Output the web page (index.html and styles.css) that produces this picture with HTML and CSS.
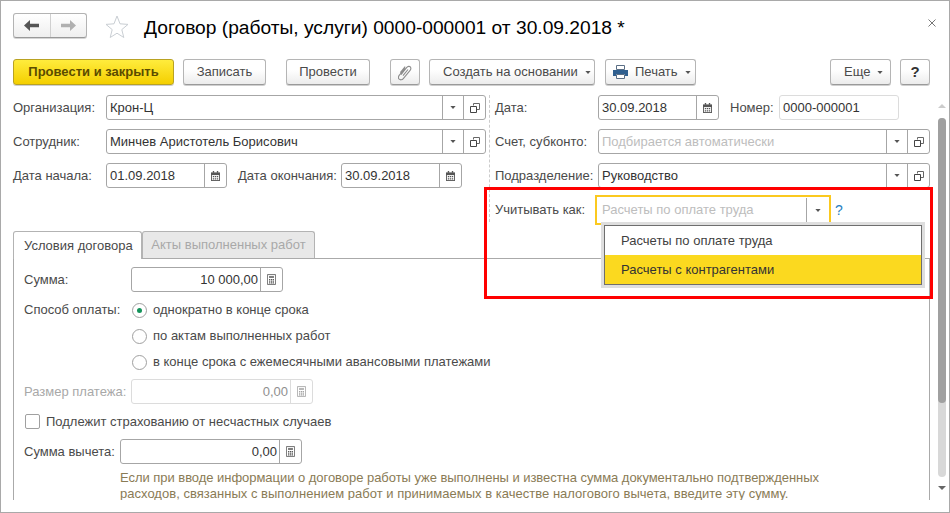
FILE: index.html
```html
<!DOCTYPE html>
<html lang="ru">
<head>
<meta charset="utf-8">
<title>Договор</title>
<link rel="stylesheet" href="styles.css">
</head>
<body>
<svg class="defs" width="0" height="0" aria-hidden="true">
  <symbol id="i-tri" viewBox="0 0 7 4"><path d="M0 0h7L3.500 4z" fill="#555"/></symbol>
  <symbol id="i-open" viewBox="0 0 10 10"><path d="M3.500 2.500V.5h6v6h-2.500" fill="none" stroke="#666"/><path d="M.5 3.500h6v6h-6z" fill="none" stroke="#444"/></symbol>
  <symbol id="i-cal" viewBox="0 0 10 11"><path d="M2 0h1.500v2H2zM6.500 0H8v2H6.500z" fill="#555"/><path d="M0 1.500h10V11H0z" fill="#555"/><path d="M1 4.500h8V10H1z" fill="#fff"/><path d="M2 5.500h1.500V7H2zM4.250 5.500h1.500V7h-1.500zM6.500 5.500H8V7H6.500zM2 8h1.500v1.300H2zM4.250 8h1.500v1.300h-1.500zM6.500 8H8v1.300H6.500z" fill="#555"/></symbol>
  <symbol id="i-calc" viewBox="0 0 11 13"><path d="M.5.500h10v12H.5z" fill="#fff" stroke="#555"/><path d="M2.500 2.500h6v2h-6zM2.500 6h1.500v1.300H2.500zM4.800 6h1.500v1.300H4.800zM7 6h1.500v1.300H7zM2.500 8h1.500v1.300H2.500zM4.800 8h1.500v1.300H4.800zM7 8h1.500v1.300H7zM2.500 10h1.500v1.300H2.500zM4.800 10h1.500v1.300H4.800zM7 10h1.500v1.300H7z" fill="#555"/></symbol>
</svg>
<div class="window">
  <header class="header">
    <div class="nav">
      <span class="nav-btn"><svg width="15" height="11" viewBox="0 0 15 11"><path d="M6 0L0 5.500 6 11V7.200h9V3.800H6z" fill="#555"/></svg></span>
      <span class="nav-btn nav-next"><svg width="15" height="11" viewBox="0 0 15 11"><path d="M9 0l6 5.500L9 11V7.200H0V3.800h9z" fill="#b0b0b0"/></svg></span>
    </div>
    <svg class="star" width="24" height="23" viewBox="0 0 24 23"><path d="M12 1l3 7.800 8 .6-6.200 5.200 2 7.900L12 18.200l-6.800 4.300 2-7.900L1 9.400l8-.6z" fill="#fff" stroke="#c9ced3"/></svg>
    <h1 class="title">Договор (работы, услуги) 0000-000001 от 30.09.2018 *</h1>
    <svg class="close" width="8" height="8" viewBox="0 0 8 8"><path d="M.5.500l7 7M7.500.500l-7 7" stroke="#777" fill="none"/></svg>
  </header>

  <div class="toolbar">
    <button class="btn btn-primary">Провести и закрыть</button>
    <button class="btn btn-save">Записать</button>
    <button class="btn btn-post">Провести</button>
    <button class="btn btn-clip"><svg width="14" height="17" viewBox="0 0 14 17"><path d="M3.500 10.500l5.800-7.300c1-1.300 2.800-1.300 3.500-.5.800 1 .6 2.500-.4 3.700l-6.600 8c-1.200 1.400-3 1.600-4.100.6-1-1-.9-2.700.2-4.100l5.600-6.800M5.500 11.500l5-6.200M2.800 8.500l4.900-6" transform="translate(-.5 .2)" fill="none" stroke="#8c8c8c" stroke-width="1.100"/></svg></button>
    <button class="btn btn-create">Создать на основании<svg class="tri" width="6" height="3"><use href="#i-tri"/></svg></button>
    <button class="btn btn-print"><svg class="printer" width="15" height="14" viewBox="0 0 15 14"><path d="M3.500.500h8v4h-8z" fill="#fff" stroke="#5a6e85"/><path d="M0 5h15v6h-3V9H3v2H0z" fill="#2f5f8f"/><path d="M3.500 9.500h8v4h-8z" fill="#fff" stroke="#5a6e85"/></svg>Печать<svg class="tri" width="6" height="3"><use href="#i-tri"/></svg></button>
    <span class="spacer"></span>
    <button class="btn btn-more">Еще<svg class="tri" width="6" height="3"><use href="#i-tri"/></svg></button>
    <button class="btn btn-help">?</button>
  </div>

  <div class="main">
    <div class="form">
      <div class="top">
        <div class="col-left">
          <div class="row">
            <label class="lbl lbl-left">Организация:</label>
            <div class="field grow"><span class="val">Крон-Ц</span><span class="cell"><svg width="6" height="3"><use href="#i-tri"/></svg></span><span class="cell"><svg width="10" height="10"><use href="#i-open"/></svg></span></div>
          </div>
          <div class="row">
            <label class="lbl lbl-left">Сотрудник:</label>
            <div class="field grow"><span class="val">Минчев Аристотель Борисович</span><span class="cell"><svg width="6" height="3"><use href="#i-tri"/></svg></span><span class="cell"><svg width="10" height="10"><use href="#i-open"/></svg></span></div>
          </div>
          <div class="row">
            <label class="lbl lbl-left">Дата начала:</label>
            <div class="field date"><span class="val">01.09.2018</span><span class="cell"><svg width="9" height="10"><use href="#i-cal"/></svg></span></div>
            <label class="lbl lbl-end">Дата окончания:</label>
            <div class="field date"><span class="val">30.09.2018</span><span class="cell"><svg width="9" height="10"><use href="#i-cal"/></svg></span></div>
          </div>
        </div>
        <div class="col-right">
          <div class="row">
            <label class="lbl lbl-right">Дата:</label>
            <div class="field date"><span class="val">30.09.2018</span><span class="cell"><svg width="9" height="10"><use href="#i-cal"/></svg></span></div>
            <label class="lbl lbl-num">Номер:</label>
            <div class="field number"><span class="val">0000-000001</span></div>
          </div>
          <div class="row">
            <label class="lbl lbl-right">Счет, субконто:</label>
            <div class="field grow"><span class="val muted">Подбирается автоматически</span><span class="cell"><svg width="6" height="3"><use href="#i-tri"/></svg></span><span class="cell"><svg width="10" height="10"><use href="#i-open"/></svg></span></div>
          </div>
          <div class="row">
            <label class="lbl lbl-right">Подразделение:</label>
            <div class="field grow"><span class="val">Руководство</span><span class="cell"><svg width="6" height="3"><use href="#i-tri"/></svg></span><span class="cell"><svg width="10" height="10"><use href="#i-open"/></svg></span></div>
          </div>
          <div class="row row-focus">
            <label class="lbl lbl-focus">Учитывать как:</label>
            <div class="field focus"><span class="val muted">Расчеты по оплате труда</span><span class="cell-line"></span><span class="cell cell-bare"><svg width="6" height="3"><use href="#i-tri"/></svg></span></div>
            <span class="hint">?</span>
          </div>
        </div>
      </div>

      <div class="tabs">
        <span class="tab tab-active">Условия договора</span>
        <span class="tab">Акты выполненных работ</span>
      </div>
      <div class="panel">
        <div class="row row-sum">
          <label class="lbl lbl-sum">Сумма:</label>
          <div class="field money"><span class="val num">10 000,00</span><span class="cell"><svg width="9" height="11"><use href="#i-calc"/></svg></span></div>
        </div>
        <div class="radio-group">
          <div class="radio-row">
            <label class="lbl lbl-sum">Способ оплаты:</label>
            <span class="radio radio-on"></span><span class="opt">однократно в конце срока</span>
          </div>
          <div class="radio-row radio-indent"><span class="radio"></span><span class="opt">по актам выполненных работ</span></div>
          <div class="radio-row radio-indent"><span class="radio"></span><span class="opt">в конце срока с ежемесячными авансовыми платежами</span></div>
        </div>
        <div class="row row-pay">
          <label class="lbl lbl-sum lbl-disabled">Размер платежа:</label>
          <div class="field money-wide disabled"><span class="val num muted-num">0,00</span><span class="cell"><svg class="dim" width="9" height="11"><use href="#i-calc"/></svg></span></div>
        </div>
        <div class="check-row"><span class="check"></span><span class="opt">Подлежит страхованию от несчастных случаев</span></div>
        <div class="row row-ded">
          <label class="lbl lbl-ded">Сумма вычета:</label>
          <div class="field money-wide"><span class="val num">0,00</span><span class="cell"><svg width="9" height="11"><use href="#i-calc"/></svg></span></div>
        </div>
        <p class="note"><span class="note-a">Если при вводе информации о договоре работы уже выполнены и известна сумма документально подтвержденных</span><span class="note-b">расходов, связанных с выполнением работ и принимаемых в качестве налогового вычета, введите эту сумму.</span></p>
      </div>
    </div>
    <div class="scroll">
      <span class="arrow arrow-up"></span>
      <div class="track"><div class="thumb"></div></div>
      <span class="arrow arrow-down"></span>
    </div>
  </div>

  <div class="popup">
    <div class="item">Расчеты по оплате труда</div>
    <div class="item item-on">Расчеты с контрагентами</div>
  </div>
  <div class="redbox"></div>
</div>
</body>
</html>
```
FILE: styles.css
```css
* { box-sizing: border-box; }
html, body { margin: 0; padding: 0; background: #fff; }
body { font: 13px/16px "Liberation Sans", Arial, sans-serif; color: #4a4a4a; }
.defs { position: absolute; }
.window { position: relative; width: 950px; height: 513px; border: 1px solid #a9a9a9; background: #fff; overflow: hidden; display: flex; flex-direction: column; }

.header { display: flex; align-items: flex-start; height: 58px; padding: 12px 13px 0 12px; flex: none; }
.nav { display: flex; width: 74px; height: 25px; border: 1px solid #b3b3b3; border-bottom-color: #999; border-radius: 3px; background: linear-gradient(#fff, #efefef); box-shadow: 0 1px 0 #d5d5d5; }
.nav-btn { width: 37px; display: flex; align-items: center; justify-content: center; }
.nav-next { border-left: 1px solid #d0d0d0; }
.star { margin: 2px 0 0 18px; flex: none; }
.title { margin: 3px 0 0 15px; font: 400 19.2px/24px "Liberation Sans", Arial, sans-serif; color: #000; white-space: nowrap; }
.close { margin: 6px 0 0 auto; flex: none; }

.toolbar { display: flex; height: 27px; padding: 0 19px 0 12px; flex: none; }
.btn { height: 26px; padding: 0; border: 1px solid #b5b5b5; border-bottom-color: #9a9a9a; border-radius: 3px; background: linear-gradient(#fff 40%, #ececec); box-shadow: 0 1px 0 #cfcfcf; font: 13px/16px "Liberation Sans", Arial, sans-serif; color: #4a4a4a; display: flex; align-items: center; justify-content: center; flex: none; }
.btn-primary { width: 161px; background: linear-gradient(#ffec3d, #f4cf00); border-color: #b9a222; font-weight: 700; color: #5b4b00; }
.btn-save { width: 83px; margin-left: 9px; }
.btn-post { width: 84px; margin-left: 20px; }
.btn-clip { width: 30px; margin-left: 20px; }
.btn-create { width: 166px; margin-left: 9px; justify-content: flex-start; padding-left: 13px; }
.btn-print { width: 91px; margin-left: 10px; justify-content: flex-start; padding-left: 7px; }
.btn-more { width: 61px; justify-content: flex-start; padding-left: 13px; }
.btn-help { width: 30px; margin-left: 9px; font-size: 15px; font-weight: 700; color: #333; }
.spacer { flex: 1; }
.tri { margin-left: 7px; }
.printer { margin-right: 7px; }

.main { display: flex; height: 405px; margin-top: 9px; flex: none; }
.form { width: 929px; padding-left: 12px; overflow: hidden; flex: none; }
.top { display: flex; height: 136px; }
.col-left { width: 473px; flex: none; }
.col-right { flex: 1; margin-left: 3px; padding-left: 6px; position: relative; }
.col-right::before { content: ""; position: absolute; left: 0; top: 0; height: 127px; border-left: 1px dashed #ccc; }

.row { display: flex; align-items: center; height: 25px; margin-bottom: 9px; }
.lbl { flex: none; white-space: nowrap; }
.lbl-left { width: 93px; }
.lbl-end { width: 103px; margin-left: 11px; }
.lbl-right { width: 103px; }
.lbl-num { width: 49px; margin-left: 11px; }
.field { display: flex; align-items: center; height: 25px; border: 1px solid #a6a6a6; border-radius: 3px; background: #fff; color: #333; flex: none; }
.grow { flex: 1; min-width: 0; }
.date { width: 121px; }
.number { width: 120px; border-color: #dcdcdc; }
.val { flex: 1; min-width: 0; padding: 0 3px; white-space: nowrap; overflow: hidden; }
.muted { color: #bdbdbd; }
.cell { width: 21px; height: 100%; flex: none; border-left: 1px solid #a6a6a6; display: flex; align-items: center; justify-content: center; }
.cell:last-child { width: 22px; }

.row-focus { height: 30px; margin-top: -2px; margin-bottom: 0; }
.lbl-focus { width: 100px; }
.field.focus { width: 236px; height: 30px; border: 2px solid #fbc91f; border-radius: 0; }
.field.focus .val { padding-left: 5px; }
.cell-line { width: 1px; height: 24px; background: #a6a6a6; flex: none; }
.field .cell-bare { width: 22px; border-left: 0; }
.hint { margin-left: 4px; color: #2a7fc1; font-size: 14px; }

.tabs { display: flex; height: 28px; border-bottom: 1px solid #aaa; }
.tab { height: 27px; width: 173px; display: flex; align-items: center; justify-content: center; background: #e8e8e8; color: #a8a8a8; border: 1px solid #b3b3b3; border-bottom: 0; border-radius: 3px 3px 0 0; }
.tab-active { width: 129px; height: 28px; justify-content: flex-start; padding-left: 10px; background: #fff; color: #4a4a4a; }

.panel { height: 241px; padding: 8px 0 0 10px; border-left: 1px solid #aaa; border-right: 1px solid #aaa; overflow: hidden; }
.lbl-sum { width: 107px; }
.lbl-disabled { color: #a8a8a8; }
.row-sum { margin-bottom: 5px; }
.money { width: 152px; }
.money-wide { width: 182px; }
.val.num { text-align: right; padding-right: 2px; }
.muted-num { color: #8f8f8f; }
.disabled { border-color: #dcdcdc; }
.disabled .cell { border-left-color: #dcdcdc; }
.dim { opacity: .55; }
.radio-row { display: flex; align-items: center; height: 26px; }
.radio-indent { padding-left: 107px; }
.radio { width: 15px; height: 15px; margin-left: 1px; border: 1px solid #a0a0a0; border-radius: 50%; background: #fff; flex: none; position: relative; }
.radio-on::after { content: ""; position: absolute; left: 4px; top: 4px; width: 5px; height: 5px; border-radius: 50%; background: #14935a; }
.opt { margin-left: 6px; white-space: nowrap; }
.radio-group { margin-bottom: 4px; }
.row-pay { margin-bottom: 5px; }
.check-row { display: flex; align-items: center; height: 25px; margin-bottom: 5px; }
.check { width: 15px; height: 15px; margin-left: 1px; border: 1px solid #a0a0a0; border-radius: 2px; flex: none; }
.lbl-ded { width: 96px; }
.row-ded { margin-bottom: 6px; }
.note { margin: 0 0 0 96px; color: #8a7b55; }
.note span { display: block; white-space: nowrap; }
.note .note-a { letter-spacing: -.04px; }
.note .note-b { letter-spacing: .02px; }

.scroll { position: relative; width: 8px; margin-left: 8px; flex: none; }
.track { position: absolute; left: 0; top: 23px; width: 8px; height: 359px; background: #d8d8d8; border-radius: 4px; }
.thumb { width: 8px; height: 285px; background: #a0a0a0; border-radius: 4px; }
.arrow { position: absolute; left: 0; width: 0; height: 0; border-left: 4px solid transparent; border-right: 4px solid transparent; }
.arrow-up { top: 9px; border-bottom: 4px solid #ccc; }
.arrow-down { top: 391px; border-top: 4px solid #666; }

.popup { position: absolute; left: 603px; top: 224px; width: 318px; height: 60px; background: #fff; border: 1px solid #6e6e6e; box-shadow: 0 0 0 3px #dedede; color: #3f3f3f; }
.item { height: 29px; padding: 0 16px; display: flex; align-items: center; }
.item-on { background: #fbd91f; color: #333; }
.redbox { position: absolute; left: 483px; top: 186px; width: 449px; height: 112px; border: 3px solid #f00; pointer-events: none; }
```
